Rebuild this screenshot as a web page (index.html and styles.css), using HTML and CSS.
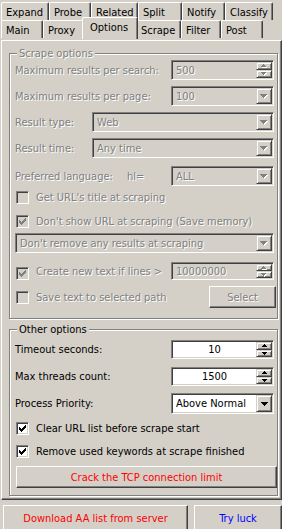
FILE: index.html
```html
<!DOCTYPE html>
<html lang="en">
<head>
    <meta charset="UTF-8">
    <meta name="viewport" content="width=device-width, initial-scale=1.0">
    <title>Options</title>
<link rel="stylesheet" href="styles.css">
</head>
<body>
    <div class="window">
        <div class="tabs">
            <div class="tab-row back">
                <div class="tab" style="width: 48px">Expand</div>
                <div class="tab" style="width: 42px">Probe</div>
                <div class="tab" style="width: 47px">Related</div>
                <div class="tab" style="width: 44px">Split</div>
                <div class="tab" style="width: 43px">Notify</div>
                <div class="tab" style="width: 48px">Classify</div>
            </div>
            <div class="tab-row front">
                <div class="tab" style="width: 42px">Main</div>
                <div class="tab" style="width: 41px">Proxy</div>
                <div class="tab active" style="width: 56px">Options</div>
                <div class="tab" style="width: 45px">Scrape</div>
                <div class="tab" style="width: 40px">Filter</div>
                <div class="tab" style="width: 42px">Post</div>
            </div>
        </div>

        <div class="page">
            <div class="group scrape-options">
                <div class="group-title off">Scrape options</div>

                <div class="row r-first">
                    <span class="label off">Maximum results per search:</span>
                    <div class="field small off">
                        <span class="value">500</span>
                        <span class="spin">
                            <span class="spin-btn"><svg width="6" height="4"><path class="hi" d="M3 1h1v1h1v1h1v1h-5v-1h1v-1h1z"/><path d="M2 0h1v1h1v1h1v1h-5v-1h1v-1h1z"/></svg></span>
                            <span class="spin-btn"><svg width="6" height="4"><path class="hi" d="M1 1h5v1h-1v1h-1v1h-1v-1h-1v-1h-1z"/><path d="M0 0h5v1h-1v1h-1v1h-1v-1h-1v-1h-1z"/></svg></span>
                        </span>
                    </div>
                </div>

                <div class="row r-next">
                    <span class="label off">Maximum results per page:</span>
                    <div class="field small off">
                        <span class="value">100</span>
                        <span class="drop"><svg width="8" height="5"><path class="hi" d="M1 1h7v1h-1v1h-1v1h-1v1h-1v-1h-1v-1h-1v-1h-1z"/><path d="M0 0h7v1h-1v1h-1v1h-1v1h-1v-1h-1v-1h-1v-1h-1z"/></svg></span>
                    </div>
                </div>

                <div class="row r-next">
                    <span class="label off">Result type:</span>
                    <div class="field wide off">
                        <span class="value">Web</span>
                        <span class="drop"><svg width="8" height="5"><path class="hi" d="M1 1h7v1h-1v1h-1v1h-1v1h-1v-1h-1v-1h-1v-1h-1z"/><path d="M0 0h7v1h-1v1h-1v1h-1v1h-1v-1h-1v-1h-1v-1h-1z"/></svg></span>
                    </div>
                </div>

                <div class="row r-next">
                    <span class="label off">Result time:</span>
                    <div class="field wide off">
                        <span class="value">Any time</span>
                        <span class="drop"><svg width="8" height="5"><path class="hi" d="M1 1h7v1h-1v1h-1v1h-1v1h-1v-1h-1v-1h-1v-1h-1z"/><path d="M0 0h7v1h-1v1h-1v1h-1v1h-1v-1h-1v-1h-1v-1h-1z"/></svg></span>
                    </div>
                </div>

                <div class="row r-lang">
                    <span class="label off lang">Preferred language:</span>
                    <span class="label off">hl=</span>
                    <div class="field small off">
                        <span class="value">ALL</span>
                        <span class="drop"><svg width="8" height="5"><path class="hi" d="M1 1h7v1h-1v1h-1v1h-1v1h-1v-1h-1v-1h-1v-1h-1z"/><path d="M0 0h7v1h-1v1h-1v1h-1v1h-1v-1h-1v-1h-1v-1h-1z"/></svg></span>
                    </div>
                </div>

                <div class="row check-row r-check1">
                    <span class="checkbox off"></span>
                    <span class="label off">Get URL's title at scraping</span>
                </div>

                <div class="row check-row r-check2">
                    <span class="checkbox off"><svg width="7" height="7"><path d="M0 2h1v3h-1zM1 3h1v3h-1zM2 4h1v3h-1zM3 3h1v3h-1zM4 2h1v3h-1zM5 1h1v3h-1zM6 0h1v3h-1z"/></svg></span>
                    <span class="label off">Don't show URL at scraping (Save memory)</span>
                </div>

                <div class="row r-remove">
                    <div class="field full off">
                        <span class="value">Don't remove any results at scraping</span>
                        <span class="drop"><svg width="8" height="5"><path class="hi" d="M1 1h7v1h-1v1h-1v1h-1v1h-1v-1h-1v-1h-1v-1h-1z"/><path d="M0 0h7v1h-1v1h-1v1h-1v1h-1v-1h-1v-1h-1v-1h-1z"/></svg></span>
                    </div>
                </div>

                <div class="row r-lines">
                    <span class="checkbox off"><svg width="7" height="7"><path d="M0 2h1v3h-1zM1 3h1v3h-1zM2 4h1v3h-1zM3 3h1v3h-1zM4 2h1v3h-1zM5 1h1v3h-1zM6 0h1v3h-1z"/></svg></span>
                    <span class="label off">Create new text if lines &gt;</span>
                    <div class="field small short off">
                        <span class="value">10000000</span>
                        <span class="spin">
                            <span class="spin-btn"><svg width="6" height="4"><path class="hi" d="M3 1h1v1h1v1h1v1h-5v-1h1v-1h1z"/><path d="M2 0h1v1h1v1h1v1h-5v-1h1v-1h1z"/></svg></span>
                            <span class="spin-btn"><svg width="6" height="4"><path class="hi" d="M1 1h5v1h-1v1h-1v1h-1v-1h-1v-1h-1z"/><path d="M0 0h5v1h-1v1h-1v1h-1v-1h-1v-1h-1z"/></svg></span>
                        </span>
                    </div>
                </div>

                <div class="row r-save">
                    <span class="checkbox off"></span>
                    <span class="label off">Save text to selected path</span>
                    <button class="button select off">Select</button>
                </div>
            </div>

            <div class="group other-options">
                <div class="group-title">Other options</div>

                <div class="row r-timeout">
                    <span class="label">Timeout seconds:</span>
                    <div class="field small short">
                        <span class="value center">10</span>
                        <span class="spin">
                            <span class="spin-btn"><svg width="5" height="3"><path d="M2 0h1v1h1v1h1v1h-5v-1h1v-1h1z"/></svg></span>
                            <span class="spin-btn"><svg width="5" height="3"><path d="M0 0h5v1h-1v1h-1v1h-1v-1h-1v-1h-1z"/></svg></span>
                        </span>
                    </div>
                </div>

                <div class="row r-threads">
                    <span class="label">Max threads count:</span>
                    <div class="field small short">
                        <span class="value center">1500</span>
                        <span class="spin">
                            <span class="spin-btn"><svg width="5" height="3"><path d="M2 0h1v1h1v1h1v1h-5v-1h1v-1h1z"/></svg></span>
                            <span class="spin-btn"><svg width="5" height="3"><path d="M0 0h5v1h-1v1h-1v1h-1v-1h-1v-1h-1z"/></svg></span>
                        </span>
                    </div>
                </div>

                <div class="row r-priority">
                    <span class="label">Process Priority:</span>
                    <div class="field small tall">
                        <span class="value">Above Normal</span>
                        <span class="drop"><svg width="7" height="4"><path d="M0 0h7v1h-1v1h-1v1h-1v1h-1v-1h-1v-1h-1v-1h-1z"/></svg></span>
                    </div>
                </div>

                <div class="row check-row r-clear">
                    <span class="checkbox"><svg width="7" height="7"><path d="M0 2h1v3h-1zM1 3h1v3h-1zM2 4h1v3h-1zM3 3h1v3h-1zM4 2h1v3h-1zM5 1h1v3h-1zM6 0h1v3h-1z"/></svg></span>
                    <span class="label">Clear URL list before scrape start</span>
                </div>

                <div class="row check-row r-used">
                    <span class="checkbox"><svg width="7" height="7"><path d="M0 2h1v3h-1zM1 3h1v3h-1zM2 4h1v3h-1zM3 3h1v3h-1zM4 2h1v3h-1zM5 1h1v3h-1zM6 0h1v3h-1z"/></svg></span>
                    <span class="label">Remove used keywords at scrape finished</span>
                </div>

                <button class="button crack red">Crack the TCP connection limit</button>
            </div>
        </div>

        <div class="footer">
            <button class="button download red">Download AA list from server</button>
            <button class="button luck blue">Try luck</button>
        </div>
    </div>
</body>
</html>
```

FILE: styles.css
```css
:root {
    --face: #d4d0c8;
    --light: #ffffff;
    --shadow: #808080;
    --dark: #404040;
    --text: #000000;
    --red: #ff0000;
    --blue: #0000ff;
}

body {
    margin: 0;
    background-color: var(--face);
    font-family: "DejaVu Sans Condensed", Tahoma, "DejaVu Sans", sans-serif;
    font-size: 11px;
    line-height: 13px;
    color: var(--text);
}

.window {
    width: 282px;
    height: 529px;
    overflow: hidden;
}

/* tabs */
.tabs {
    height: 38px;
    padding-left: 1px;
}

.tab-row {
    display: flex;
    height: 18px;
}

.tab-row.back {
    margin-top: 2px;
}

.tab {
    box-sizing: border-box;
    height: 18px;
    padding: 3px 0 0 4px;
    border-top: 1px solid var(--light);
    border-left: 1px solid var(--light);
    border-right: 1px solid var(--dark);
    border-radius: 2px 2px 0 0;
    box-shadow: inset -1px 0 var(--shadow);
    white-space: nowrap;
    overflow: hidden;
}

.tab.active {
    position: relative;
    z-index: 1;
    height: 22px;
    margin: -3px -2px -1px -2px;
    padding-left: 7px;
    background-color: var(--face);
}

/* tab page */
.page {
    box-sizing: border-box;
    width: 281px;
    height: 460px;
    margin-left: 1px;
    padding: 0 1px 0 7px;
    border: 1px solid;
    border-color: var(--light) var(--dark) var(--dark) var(--light);
    box-shadow: inset -1px -1px var(--shadow);
}

.group {
    box-sizing: border-box;
    width: 269px;
    display: flex;
    flex-direction: column;
    padding: 0 3px 0 5px;
    border: 1px solid var(--shadow);
    box-shadow: inset 1px 1px var(--light), 1px 1px var(--light);
}

.scrape-options {
    margin-top: 12px;
    padding-bottom: 10px;
}

.other-options {
    margin-top: 10px;
    padding-bottom: 7px;
}

.group-title {
    align-self: flex-start;
    margin: -7px 0 0 2px;
    padding: 0 2px;
    background-color: var(--face);
}

.off {
    color: var(--shadow);
    text-shadow: 1px 1px var(--light);
}

.row {
    display: flex;
    align-items: center;
}

.label {
    white-space: nowrap;
}

.label.lang {
    width: 112px;
}

.row .field {
    margin-left: auto;
}

.r-first { margin-top: 0; }
.r-next { margin-top: 6px; }
.r-lang { margin-top: 8px; }
.r-check1 { margin-top: 5px; }
.r-check2 { margin-top: 11px; }
.r-remove { margin-top: 5px; }
.r-lines { margin-top: 9px; height: 18px; }
.r-save { margin-top: 6px; }
.r-timeout { margin-top: 4px; }
.r-threads { margin-top: 8px; }
.r-priority { margin-top: 7px; }
.r-clear { margin-top: 8px; }
.r-used { margin-top: 10px; }

/* sunken fields */
.field {
    box-sizing: border-box;
    display: flex;
    height: 20px;
    padding: 1px;
    border: 1px solid;
    border-color: var(--shadow) var(--light) var(--light) var(--shadow);
    box-shadow: inset 1px 1px var(--dark), inset -1px -1px var(--face);
    background-color: var(--light);
}

.field.off {
    background-color: var(--face);
}

.field.small { width: 103px; }
.field.wide { width: 182px; }
.field.full { width: 259px; margin-left: 0; }
.field.short { height: 19px; }
.r-lines .field { height: 18px; }
.field.tall { height: 21px; }

.value {
    flex-grow: 1;
    align-self: center;
    padding-left: 3px;
    white-space: nowrap;
    overflow: hidden;
}

.value.center {
    text-align: center;
    padding-left: 0;
}

.drop,
.spin-btn {
    box-sizing: border-box;
    display: flex;
    align-items: center;
    justify-content: center;
    background-color: var(--face);
    border: 1px solid;
    border-color: var(--face) var(--dark) var(--dark) var(--face);
    box-shadow: inset 1px 1px var(--light), inset -1px -1px var(--shadow);
}

.drop {
    width: 16px;
}

.spin {
    width: 16px;
    display: flex;
    flex-direction: column;
}

.spin-btn {
    flex: 1;
}

svg {
    display: block;
    shape-rendering: crispEdges;
    fill: var(--text);
}

.off svg {
    fill: var(--shadow);
}

.off svg .hi {
    fill: var(--light);
}

/* checkboxes */
.checkbox {
    box-sizing: border-box;
    flex-shrink: 0;
    width: 13px;
    height: 13px;
    margin: 0 7px 0 1px;
    padding: 2px;
    border: 1px solid;
    border-color: var(--shadow) var(--light) var(--light) var(--shadow);
    box-shadow: inset 1px 1px var(--dark), inset -1px -1px var(--face);
    background-color: var(--light);
}

.checkbox.off {
    background-color: var(--face);
}

.r-lines .checkbox {
    align-self: flex-end;
}

/* buttons */
.button {
    box-sizing: border-box;
    font: inherit;
    color: var(--text);
    background-color: var(--face);
    border: 1px solid;
    border-color: var(--light) var(--dark) var(--dark) var(--light);
    box-shadow: inset -1px -1px var(--shadow);
    padding: 0;
}

.button.off {
    color: var(--shadow);
}

.select {
    width: 67px;
    height: 22px;
    margin-left: auto;
    margin-right: -2px;
}

.crack {
    width: 261px;
    height: 22px;
    margin: 8px 0 0 1px;
}

.red { color: var(--red); }
.blue { color: var(--blue); }

.footer {
    display: flex;
    gap: 6px;
    padding: 5px 0 0 3px;
}

.download {
    width: 185px;
    height: 26px;
}

.luck {
    width: 88px;
    height: 26px;
}
```
